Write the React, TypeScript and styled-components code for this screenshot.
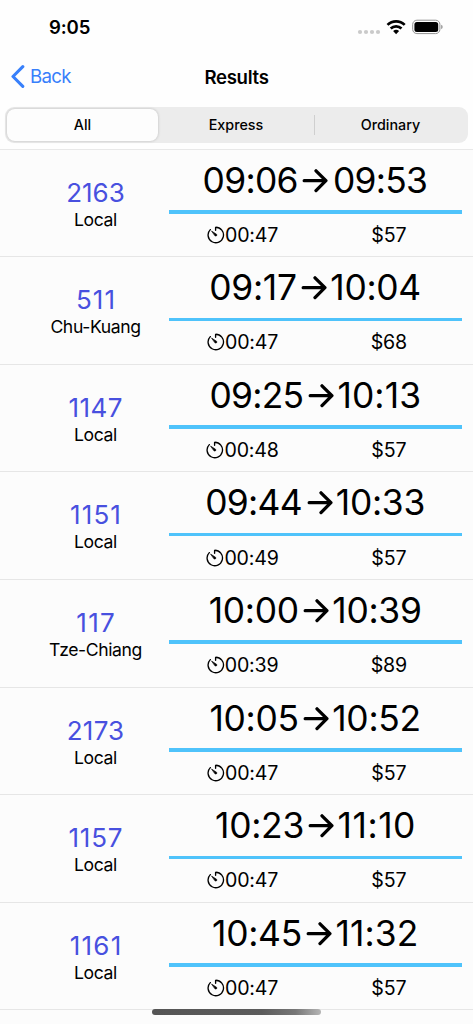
import React from "react";
import styled, { createGlobalStyle } from "styled-components";

const GlobalStyle = createGlobalStyle`
  * { box-sizing: border-box; }
  body {
    margin: 0;
    background: #fcfcfc;
    color: #000;
    font-family: Inter, "Liberation Sans", sans-serif;
    overflow: hidden;
  }
`;

const Screen = styled.main`
  position: relative;
  width: 473px;
  height: 1024px;
  overflow: hidden;
  display: flex;
  flex-direction: column;
`;

const Header = styled.header`
  height: 148.6px;
  flex: none;
  background: #fefefe;
`;

const StatusBar = styled.div`
  height: 54px;
  padding: 0 30px 0 49px;
  display: flex;
  align-items: center;
  justify-content: space-between;
`;

const Clock = styled.span`
  font-size: 18.6px;
  font-weight: 600;
  letter-spacing: -0.15px;
  line-height: 22px;
`;

const NavBar = styled.nav`
  height: 46px;
  padding: 0 11px;
  display: grid;
  grid-template-columns: 1fr auto 1fr;
  align-items: center;
`;

const BackButton = styled.button`
  display: flex;
  align-items: center;
  gap: 5px;
  padding: 0;
  border: 0;
  background: none;
  color: #3880fb;
  font: 400 18.7px/24px Inter, sans-serif;
  letter-spacing: -0.75px;
`;

const Title = styled.h1`
  margin: 0;
  font-size: 18.6px;
  font-weight: 600;
  line-height: 24px;
  letter-spacing: -0.3px;
`;

const Segments = styled.div`
  display: flex;
  align-items: center;
  height: 36px;
  margin: 7px 5px 0;
  padding: 2px;
  border-radius: 9px;
  background: #ececec;
`;

const Segment = styled.button<{ $selected?: boolean; $width: number }>`
  width: ${(p) => p.$width}px;
  height: 32px;
  padding: 0;
  border: 0;
  border-radius: 8px;
  background: ${(p) => (p.$selected ? "#fdfdfd" : "transparent")};
  box-shadow: ${(p) => (p.$selected ? "0 0 3px rgba(0, 0, 0, 0.22)" : "none")};
  color: #000;
  font: 500 14.3px/20px Inter, sans-serif;
`;

const SegmentDivider = styled.span`
  width: 1px;
  height: 20px;
  background: #cfcfcf;
`;

const List = styled.ul`
  margin: 0;
  padding: 0;
  list-style: none;
  border-top: 1px solid #e8e8e8;
`;

const Row = styled.li`
  height: 107.6px;
  display: flex;
  border-bottom: 1px solid #e6e6e6;
`;

const Train = styled.div`
  width: 169px;
  padding: 27px 0 0 22px;
  text-align: center;
`;

const TrainNumber = styled.div<{ $spacing: number }>`
  color: #4850df;
  font-size: 26px;
  line-height: 31px;
  letter-spacing: ${(p) => p.$spacing}px;
  margin-right: ${(p) => -p.$spacing}px;
`;

const TrainType = styled.div`
  margin-top: 1px;
  font-size: 17.6px;
  line-height: 22px;
  letter-spacing: -0.4px;
`;

const Trip = styled.div`
  width: 292.5px;
`;

const Times = styled.div`
  height: 60.4px;
  padding-top: 1.6px;
  display: flex;
  align-items: center;
  justify-content: center;
`;

const Time = styled.span<{ $spacing: number }>`
  font-size: 35.4px;
  line-height: 44px;
  letter-spacing: ${(p) => p.$spacing}px;
  margin-right: ${(p) => -p.$spacing}px;
`;

const ArrowIcon = styled.svg<{ $tight: boolean }>`
  flex: none;
  margin-left: 4px;
  margin-right: ${(p) => (p.$tight ? 3.3 : 4.5)}px;
`;

const Rule = styled.div`
  height: 3.6px;
  background: #4fc3fb;
`;

const Details = styled.div`
  display: flex;
  height: 42.6px;
  align-items: center;
`;

const Detail = styled.div`
  flex: 1;
  display: flex;
  align-items: center;
  justify-content: center;
  padding-left: 1px;
  font-size: 19.6px;
  line-height: 24px;
  letter-spacing: -0.15px;
`;

const HomeIndicator = styled.div`
  position: absolute;
  left: 152px;
  top: 1009px;
  width: 169px;
  height: 6px;
  border-radius: 3px;
  background: linear-gradient(90deg, #555, #5c5c5c 65%, #777 85%, #b5b5b5);
`;

const StatusIcons = () => (
  <svg width="86" height="20" viewBox="0 0 86 20">
    <g fill="#cacaca">
      <circle cx="3" cy="15" r="2.1" />
      <circle cx="9" cy="15" r="2.1" />
      <circle cx="15" cy="15" r="2.1" />
      <circle cx="21" cy="15" r="2.1" />
    </g>
    <g fill="none" stroke="#000" strokeWidth="2.7">
      <path d="M30.5 7.9a12.3 12.3 0 0 1 17.2 0" />
      <path d="M33.7 11.5a7.8 7.8 0 0 1 10.8 0" />
    </g>
    <path d="M36.1 14.1a4.3 4.3 0 0 1 6 0L39.1 17.2z" />
    <rect x="55.7" y="3.2" width="27.2" height="13.4" rx="4.2" fill="none" stroke="#919191" />
    <rect x="57.4" y="4.9" width="23.8" height="10" rx="2.5" />
    <path d="M84.1 7.8q1.6.6 1.6 2.2t-1.6 2.2z" fill="#999" />
  </svg>
);

const Chevron = () => (
  <svg width="14" height="24" viewBox="0 0 14 24" fill="none" stroke="#3880fb" strokeWidth="3.1" strokeLinecap="round" strokeLinejoin="round">
    <path d="M11.8 1.7 2 11.5l9.8 9.8" />
  </svg>
);

const Arrow = ({ tight }: { tight: boolean }) => (
  <ArrowIcon $tight={tight} width="26" height="26" viewBox="0 0 26 26" fill="none" stroke="#000" strokeWidth="3.3" strokeLinecap="round" strokeLinejoin="round">
    <path d="M2.2 12.7h21.2M14 2.8l9.9 9.9-9.9 9.9" />
  </ArrowIcon>
);

const Timer = () => (
  <svg width="18" height="18" viewBox="0 0 18 18" fill="none" stroke="#000" strokeWidth="1.35" strokeLinecap="round" strokeLinejoin="round">
    <path d="M8.6 4.3V1.3a7.7 7.7 0 1 1-5.3 2.3" />
    <path d="m4.9 5.3 4.8 3.1a1.1 1.1 0 0 1-1.5 1.5z" fill="#000" strokeWidth=".7" />
  </svg>
);

/* The digit 1 is narrow in Inter, so times get extra tracking for each one. */
const timeSpacing = (time: string) => -0.72 + 0.42 * (time.split("1").length - 1);

interface Result {
  number: string;
  tracking: number;
  type: string;
  depart: string;
  arrive: string;
  duration: string;
  fare: string;
}

const results: Result[] = [
  { number: "2163", tracking: 0, type: "Local", depart: "09:06", arrive: "09:53", duration: "00:47", fare: "$57" },
  { number: "511", tracking: 1.1, type: "Chu-Kuang", depart: "09:17", arrive: "10:04", duration: "00:47", fare: "$68" },
  { number: "1147", tracking: 0.5, type: "Local", depart: "09:25", arrive: "10:13", duration: "00:48", fare: "$57" },
  { number: "1151", tracking: 1.1, type: "Local", depart: "09:44", arrive: "10:33", duration: "00:49", fare: "$57" },
  { number: "117", tracking: 1.2, type: "Tze-Chiang", depart: "10:00", arrive: "10:39", duration: "00:39", fare: "$89" },
  { number: "2173", tracking: 0.2, type: "Local", depart: "10:05", arrive: "10:52", duration: "00:47", fare: "$57" },
  { number: "1157", tracking: 0.7, type: "Local", depart: "10:23", arrive: "11:10", duration: "00:47", fare: "$57" },
  { number: "1161", tracking: 1.2, type: "Local", depart: "10:45", arrive: "11:32", duration: "00:47", fare: "$57" },
];

export default function App() {
  return (
    <Screen>
      <GlobalStyle />
      <Header>
        <StatusBar>
          <Clock>9:05</Clock>
          <StatusIcons />
        </StatusBar>
        <NavBar>
          <BackButton><Chevron />Back</BackButton>
          <Title>Results</Title>
        </NavBar>
        <Segments>
          <Segment $selected $width={151}>All</Segment>
          <Segment $width={156}>Express</Segment>
          <SegmentDivider />
          <Segment $width={151}>Ordinary</Segment>
        </Segments>
      </Header>
      <List>
        {results.map((r) => (
          <Row key={r.number}>
            <Train>
              <TrainNumber $spacing={r.tracking}>{r.number}</TrainNumber>
              <TrainType>{r.type}</TrainType>
            </Train>
            <Trip>
              <Times>
                <Time $spacing={timeSpacing(r.depart)}>{r.depart}</Time>
                <Arrow tight={r.arrive.startsWith("1")} />
                <Time $spacing={timeSpacing(r.arrive)}>{r.arrive}</Time>
              </Times>
              <Rule />
              <Details>
                <Detail><Timer />{r.duration}</Detail>
                <Detail>{r.fare}</Detail>
              </Details>
            </Trip>
          </Row>
        ))}
      </List>
      <HomeIndicator />
    </Screen>
  );
}
